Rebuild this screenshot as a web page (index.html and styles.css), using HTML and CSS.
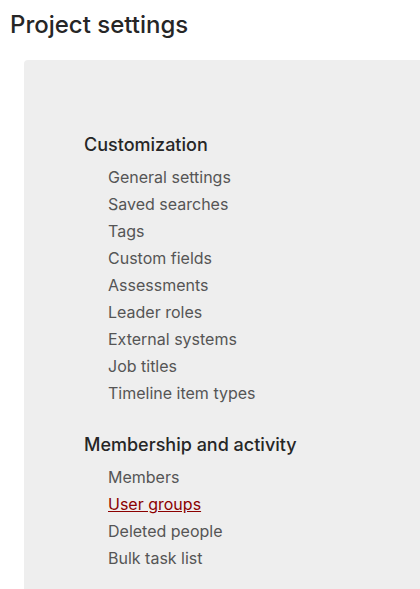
FILE: index.html
```html
<!DOCTYPE html>
<html>
<head>
<meta charset="utf-8">
<link rel="stylesheet" href="styles.css">
</head>
<body>
<h1 class="title">Project settings</h1>
<div class="panel">
  <section class="group">
    <h2 class="group-title">Customization</h2>
    <ul class="links">
      <li><a href="#">General settings</a></li>
      <li><a href="#">Saved searches</a></li>
      <li><a href="#">Tags</a></li>
      <li><a href="#">Custom fields</a></li>
      <li><a href="#">Assessments</a></li>
      <li><a href="#">Leader roles</a></li>
      <li><a href="#">External systems</a></li>
      <li><a href="#">Job titles</a></li>
      <li><a href="#">Timeline item types</a></li>
    </ul>
  </section>
  <section class="group">
    <h2 class="group-title">Membership and activity</h2>
    <ul class="links">
      <li><a href="#">Members</a></li>
      <li><a href="#" class="active">User groups</a></li>
      <li><a href="#">Deleted people</a></li>
      <li><a href="#">Bulk task list</a></li>
    </ul>
  </section>
</div>
</body>
</html>
```
FILE: styles.css
```css
html, body {
  margin: 0;
  padding: 0;
  background: #fff;
  font-family: Inter, "Noto Sans", sans-serif;
}
.title {
  margin: 0;
  padding: 10px 10px 0;
  font-size: 24px;
  font-weight: 500;
  line-height: 29px;
  color: #262626;
}
.panel {
  margin: 21px 0 0 24px;
  background: #eeeeee;
  border-radius: 4px 0 0 0;
  padding: 73px 0 20px 60px;
  min-height: 529px;
  box-sizing: border-box;
}
.group + .group {
  margin-top: 26px;
}
.group-title {
  margin: 0 0 7px;
  font-size: 18px;
  font-weight: 500;
  line-height: 24px;
  color: #262626;
}
.links {
  list-style: none;
  margin: 0;
  padding: 0 0 0 24px;
}
.links li {
  line-height: 27px;
  font-size: 16px;
}
.links a {
  color: #555;
  text-decoration: none;
}
.links a.active {
  color: #8b0000;
  text-decoration: underline;
}
```
